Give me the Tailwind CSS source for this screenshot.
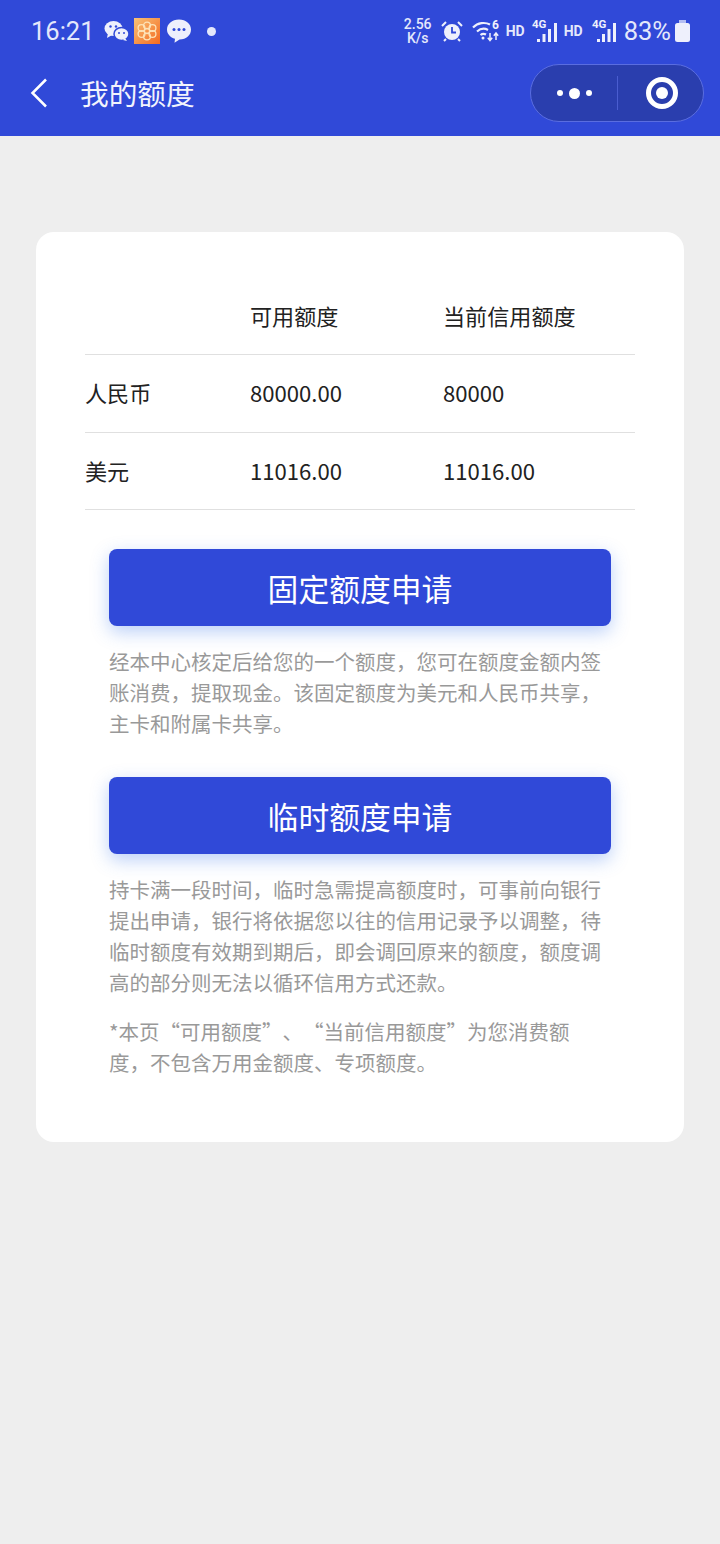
<!DOCTYPE html>
<html lang="zh-CN">
<head>
    <meta charset="UTF-8">
    <title>我的额度</title>
    <script src="https://cdn.jsdelivr.net/npm/@tailwindcss/browser@4"></script>
</head>
<body class="bg-[#eeeeee] font-['Noto_Sans_CJK_SC','Noto_Sans',sans-serif]">
<div class="w-[720px] h-[1544px] flex flex-col">

    <!-- header -->
    <header class="bg-[#3049d8] h-[136px] text-white shrink-0">
        <div class="h-[62px] flex items-center justify-between pl-[31px] pr-[30px]">
            <div class="flex items-center">
                <span class="mt-[2px] font-['Roboto',sans-serif] text-[25.5px] leading-none text-[#e4e8fb]">16:21</span>
                <svg class="ml-[9px]" width="26" height="24" viewBox="0 0 26 24"><ellipse cx="9.5" cy="9.5" rx="9" ry="7.5" fill="#eef0fc"/><path d="M4 14l-1 5 5-3z" fill="#eef0fc"/><ellipse cx="17.5" cy="15" rx="7.5" ry="6.5" fill="#eef0fc" stroke="#3049d8" stroke-width="1.5"/><path d="M21 19l2 3-4-1z" fill="#eef0fc"/><circle cx="6.5" cy="7.5" r="1.2" fill="#3049d8"/><circle cx="12" cy="7.5" r="1.2" fill="#3049d8"/><circle cx="15" cy="14" r="1" fill="#3049d8"/><circle cx="20" cy="14" r="1" fill="#3049d8"/></svg>
                <svg class="ml-[4px]" width="26" height="26" viewBox="0 0 26 26"><defs><linearGradient id="og" x1="0" y1="0" x2="1" y2="1"><stop offset="0" stop-color="#f8c277"/><stop offset="1" stop-color="#f4691f"/></linearGradient></defs><rect width="26" height="26" fill="url(#og)"/><g fill="none" stroke="#fde3b8" stroke-width="1.3"><circle cx="13" cy="7.5" r="3.4"/><circle cx="13" cy="18.5" r="3.4"/><circle cx="7.5" cy="10" r="3.4"/><circle cx="18.5" cy="10" r="3.4"/><circle cx="7.5" cy="16" r="3.4"/><circle cx="18.5" cy="16" r="3.4"/><circle cx="13" cy="13" r="2.6"/></g></svg>
                <svg class="ml-[6px]" width="26" height="26" viewBox="0 0 26 26"><path d="M13 1.500C6 1.500 1 6 1 11.500c0 4.500 3.300 8 8 9.300l-.5 4 5-3.300C20.500 21.500 25 17 25 11.500 25 6 20 1.500 13 1.500z" fill="#eef0fc"/><circle cx="8" cy="11.500" r="1.500" fill="#3049d8"/><circle cx="13" cy="11.500" r="1.500" fill="#3049d8"/><circle cx="18" cy="11.500" r="1.500" fill="#3049d8"/></svg>
                <span class="ml-[15px] w-[9px] h-[9px] rounded-full bg-[#e4e8fb]"></span>
            </div>
            <div class="flex items-center font-['Roboto',sans-serif] text-[#e4e8fb]">
                <div class="w-[30px] text-center text-[14px] leading-[14px] font-medium"><div>2.56</div><div>K/s</div></div>
                <svg class="ml-[8px]" width="22" height="22" viewBox="0 0 22 22"><circle cx="11" cy="12" r="8" fill="#eef0fc"/><path d="M11 7v5.500l4 0" fill="none" stroke="#3049d8" stroke-width="1.800"/><path d="M1 6l4-4M21 6l-4-4M5 19l-2 2M17 19l2 2" stroke="#eef0fc" stroke-width="2"/></svg>
                <svg class="ml-[9px]" width="30" height="24" viewBox="0 0 30 24"><g fill="none" stroke="#eef0fc" stroke-width="2.200"><path d="M1 8.500C6 3.500 13 3 18 5.500"/><path d="M5 12.500C8.500 9.500 12.500 9 16 11"/><path d="M8.500 16C10 14.800 12 14.500 14 15.500"/></g><circle cx="11" cy="19" r="1.500" fill="#eef0fc"/><path d="M18 14v7M15.800 18.800l2.200 2.700 2.200-2.700M24 21v-7M21.800 16.700l2.200-2.700 2.200 2.700" fill="none" stroke="#eef0fc" stroke-width="1.500"/><text x="20" y="10" font-size="12" font-weight="700" fill="#eef0fc" font-family="Roboto">6</text></svg>
                <span class="ml-[4px] text-[14px] font-bold">HD</span>
                <svg class="ml-[6px]" width="27" height="26" viewBox="0 0 27 26"><text x="1" y="10" font-size="11.500" font-weight="700" fill="#eef0fc" font-family="Roboto">4G</text><g fill="#eef0fc"><rect x="6" y="21" width="3" height="3"/><rect x="11.500" y="16" width="3" height="8"/><rect x="17" y="11" width="3" height="13"/><rect x="23" y="5" width="3" height="19"/></g></svg>
                <span class="ml-[6px] text-[14px] font-bold">HD</span>
                <svg class="ml-[8px]" width="26" height="26" viewBox="0 0 26 26"><text x="1" y="10" font-size="11.500" font-weight="700" fill="#eef0fc" font-family="Roboto">4G</text><g fill="#eef0fc"><rect x="6" y="21" width="3" height="3"/><rect x="11" y="16" width="3" height="8"/><rect x="16.500" y="11" width="3" height="13"/><rect x="22" y="5" width="3" height="19"/></g></svg>
                <span class="ml-[7px] mt-[2px] text-[25.5px] leading-none">83%</span>
                <svg class="ml-[4px]" width="15" height="22" viewBox="0 0 15 22"><path d="M4 0h7v3H4z" fill="#b4bef2"/><rect y="3" width="15" height="19" rx="2.500" fill="#eef0fc"/></svg>
            </div>
        </div>
        <div class="h-[62px] flex items-center pl-[30px] pr-[16px] justify-between">
            <div class="flex items-center">
                <svg width="18" height="30" viewBox="0 0 18 30"><path d="M16 1.500 2.500 15 16 28.500" fill="none" stroke="#ffffff" stroke-width="2.500"/></svg>
                <h1 class="ml-[32px] text-[28.7px] leading-none text-[#f2f4fd]">我的额度</h1>
            </div>
            <div class="w-[174px] h-[58px] rounded-full bg-[#2a3eae] border border-[#5a6de0] flex items-center">
                <div class="w-[86px] flex items-center justify-center gap-[6px]">
                    <span class="w-[6px] h-[6px] rounded-full bg-white"></span>
                    <span class="w-[11px] h-[11px] rounded-full bg-white"></span>
                    <span class="w-[6px] h-[6px] rounded-full bg-white"></span>
                </div>
                <div class="w-px h-[34px] bg-[#4a5dd0]"></div>
                <div class="flex-1 flex justify-center pl-[2px]">
                    <div class="w-[32px] h-[32px] rounded-full border-[5px] border-white flex items-center justify-center">
                        <span class="w-[12px] h-[12px] rounded-full bg-white"></span>
                    </div>
                </div>
            </div>
        </div>
    </header>

    <!-- card -->
    <main class="mx-[36px] mt-[96px] h-[910px] bg-white rounded-[18px] px-[49px] pt-[46px]">
        <div class="grid grid-cols-[165px_193px_1fr] text-[22.1px] text-[#222222] h-[77px] pb-[1px] items-center border-b border-[#e0e0e0]">
            <div></div><div>可用额度</div><div>当前信用额度</div>
        </div>
        <div class="grid grid-cols-[165px_193px_1fr] text-[22.1px] text-[#222222] h-[78px] pb-[1px] items-center border-b border-[#e0e0e0]">
            <div>人民币</div><div>80000.00</div><div>80000</div>
        </div>
        <div class="grid grid-cols-[165px_193px_1fr] text-[22.1px] text-[#222222] h-[77px] pb-[1px] items-center border-b border-[#e0e0e0]">
            <div>美元</div><div>11016.00</div><div>11016.00</div>
        </div>

        <div class="px-[24px] pt-[39px] [text-spacing-trim:space-all]">
            <div class="h-[77px] pt-[2px] rounded-[8px] bg-[#3049d8] text-white text-[30.8px] flex items-center justify-center shadow-[0_6px_18px_rgba(60,120,235,0.35)]">固定额度申请</div>
            <p class="mt-[20px] text-[20.5px] leading-[31px] text-[#999999]">经本中心核定后给您的一个额度，您可在额度金额内签账消费，提取现金。该固定额度为美元和人民币共享，主卡和附属卡共享。</p>
            <div class="mt-[38px] h-[77px] pt-[2px] rounded-[8px] bg-[#3049d8] text-white text-[30.8px] flex items-center justify-center shadow-[0_6px_18px_rgba(60,120,235,0.35)]">临时额度申请</div>
            <p class="mt-[20px] text-[20.5px] leading-[31px] text-[#999999]">持卡满一段时间，临时急需提高额度时，可事前向银行提出申请，银行将依据您以往的信用记录予以调整，待临时额度有效期到期后，即会调回原来的额度，额度调高的部分则无法以循环信用方式还款。</p>
            <p class="mt-[18px] pr-[12px] text-[20.5px] leading-[31px] text-[#999999]">*本页“可用额度”、“当前信用额度”为您消费额度，不包含万用金额度、专项额度。</p>
        </div>
    </main>
</div>
</body>
</html>
